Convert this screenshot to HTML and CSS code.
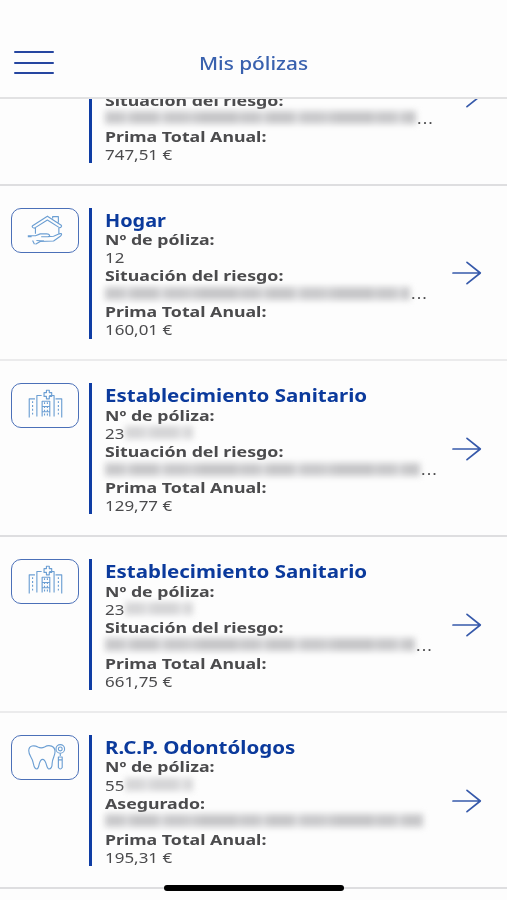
FILE: index.html
```html
<!DOCTYPE html>
<html lang="es">
<head>
<meta charset="utf-8">
<meta name="viewport" content="width=device-width, initial-scale=1">
<title>Mis pólizas</title>
<link rel="stylesheet" href="styles.css">
</head>
<body>
<svg class="defs" aria-hidden="true">
  <symbol id="arrow" viewBox="0 0 30 24"><path d="M1 12h27M15 1.3 28.3 12 15 22.7"/></symbol>
  <symbol id="home" viewBox="0 0 68 45"><path d="M21 17.500 36.500 7.500 51 17c1 1-.5 3-2 2.500L36.500 11.500 23 20c-2 0-3-1.500-2-2.500ZM42 10V8h6V14M24 20v6M48.500 20v6M16 28h8l5-2h7c3 0 4 3 1 3h-7M37 29l6-.5 6-2.500c3-1 3 1 1 2.500l-7 5-14 .5-5 3M16 29h4M21 33l2 4M25 33l8 .5"/></symbol>
  <symbol id="clinic" viewBox="0 0 68 45"><path d="M17.500 35V15.500h6M25.500 34V12h5M38.500 12h5v22M45 15.500h6.500V35M31 34V18h8v16M31 23.500h8M31 29h8M33 9h2.500V6.500h3V9H41v4h-2.500v2.500h-3V13H33Z"/><path class="dots" d="M21 18v16M48 18v16M33.500 19v14M36.500 19v14"/></symbol>
  <symbol id="tooth" viewBox="0 0 68 45"><path d="M17 15.500c0-6 6-6 9.500-4 2 1 5 1 7 0 5-3 11-1 11 5 0 5-3 7-3 12 0 3-1 6-3.500 6-3 0-2-10-6.500-10s-3 10-6 10-3-3-4-7c-1-5-4.500-7-4.500-12Z"/><circle cx="50" cy="13.500" r="4.500"/><circle cx="50" cy="13.500" r="2"/><path d="M50 18v3M48 22h4v11q-2 3-4 0ZM48 25h4"/></symbol>
</svg>
<header class="topbar">
  <button class="menu" aria-label="Menú"><span></span><span></span><span></span></button>
  <h1>Mis pólizas</h1>
</header>
<main>
  <article class="card card-clipped">
    <div class="row">
      <div class="side"></div>
      <div class="info info-end">
        <p><b>Situación del riesgo:</b></p>
        <p class="masked"><i class="blur w311"></i><span class="more">...</span></p>
        <p><b>Prima Total Anual:</b></p>
        <p><span>747,51 €</span></p>
      </div>
      <svg class="arrow"><use href="#arrow"/></svg>
    </div>
  </article>
  <article class="card">
    <div class="row">
      <div class="side"><svg class="badge"><use href="#home"/></svg></div>
      <div class="info">
        <h2 class="short">Hogar</h2>
        <p><b>Nº de póliza:</b></p>
        <p><span>12</span></p>
        <p><b>Situación del riesgo:</b></p>
        <p class="masked"><i class="blur w305"></i><span class="more">...</span></p>
        <p><b>Prima Total Anual:</b></p>
        <p><span>160,01 €</span></p>
      </div>
      <svg class="arrow"><use href="#arrow"/></svg>
    </div>
  </article>
  <article class="card">
    <div class="row">
      <div class="side"><svg class="badge"><use href="#clinic"/></svg></div>
      <div class="info">
        <h2>Establecimiento Sanitario</h2>
        <p><b>Nº de póliza:</b></p>
        <p class="masked"><span class="prefix">23</span><i class="blur blur-number"></i></p>
        <p><b>Situación del riesgo:</b></p>
        <p class="masked"><i class="blur w315"></i><span class="more">...</span></p>
        <p><b>Prima Total Anual:</b></p>
        <p><span>129,77 €</span></p>
      </div>
      <svg class="arrow"><use href="#arrow"/></svg>
    </div>
  </article>
  <article class="card">
    <div class="row">
      <div class="side"><svg class="badge"><use href="#clinic"/></svg></div>
      <div class="info">
        <h2>Establecimiento Sanitario</h2>
        <p><b>Nº de póliza:</b></p>
        <p class="masked"><span class="prefix">23</span><i class="blur blur-number"></i></p>
        <p><b>Situación del riesgo:</b></p>
        <p class="masked"><i class="blur w310"></i><span class="more">...</span></p>
        <p><b>Prima Total Anual:</b></p>
        <p><span>661,75 €</span></p>
      </div>
      <svg class="arrow"><use href="#arrow"/></svg>
    </div>
  </article>
  <article class="card">
    <div class="row">
      <div class="side"><svg class="badge"><use href="#tooth"/></svg></div>
      <div class="info">
        <h2>R.C.P. Odontólogos</h2>
        <p><b>Nº de póliza:</b></p>
        <p class="masked"><span class="prefix">55</span><i class="blur blur-number"></i></p>
        <p><b>Asegurado:</b></p>
        <p class="masked"><i class="blur w318"></i></p>
        <p><b>Prima Total Anual:</b></p>
        <p><span>195,31 €</span></p>
      </div>
      <svg class="arrow"><use href="#arrow"/></svg>
    </div>
  </article>
</main>
<div class="home-indicator"></div>
</body>
</html>
```
FILE: styles.css
```css
* { box-sizing: border-box; margin: 0; padding: 0; }
body {
  height: 900px;
  overflow: hidden;
  background: #fdfdfd;
  color: #4b4b4d;
  font: 15px/18.1px "Noto Sans", "Open Sans", sans-serif;
}
.defs { position: absolute; width: 0; height: 0; }
.topbar {
  display: grid;
  grid-template-columns: 54px 1fr 54px;
  align-items: end;
  height: 99px;
  padding-bottom: 21px;
  border-bottom: 2px solid #e2e2e3;
}
.menu {
  display: flex;
  flex-direction: column;
  justify-content: space-between;
  width: 40px;
  height: 23px;
  margin: 0 0 2px 14px;
  border: 0;
  background: none;
}
.menu span { height: 2px; border-radius: 1px; background: #2646a0; }
h1 {
  color: #3961ae;
  font-size: 17.5px;
  font-weight: 500;
  line-height: 26px;
  text-align: center;
  transform: scaleX(1.19);
}
.card { height: 175.9px; padding-top: 22px; border-bottom: 2px solid #dedee0; }
.card:nth-child(2), .card:nth-child(4) { border-bottom-color: #ebebec; }
.card-clipped {
  display: flex;
  align-items: flex-end;
  height: 86.500px;
  padding: 0 0 22px;
  overflow: hidden;
}
.row {
  display: grid;
  grid-template-columns: 89px 349px 30px;
  column-gap: 7px;
  flex: none;
  height: 131px;
}
.side { padding-left: 11px; }
.badge {
  display: block;
  width: 68px;
  height: 45px;
  border: 1.5px solid #4b70b8;
  border-radius: 10px;
  fill: none;
  stroke: #6c9fd3;
  stroke-width: 1.2;
  stroke-linejoin: round;
}
.dots { stroke-dasharray: 2 2; }
.info {
  margin-left: -7px;
  padding-left: 13px;
  border-left: 3px solid #0f3da4;
}
.info-end { padding-top: 60.200px; }
.info p { height: 18.1px; white-space: nowrap; }
.info p b, .info p span, .info h2 {
  display: inline-block;
  transform: scaleX(1.13);
  transform-origin: 0 50%;
}
.info p b { transform: scaleX(1.183); }
.info h2 {
  display: block;
  width: max-content;
  height: 22.300px;
  color: #0b3a9c;
  font-size: 17.5px;
  font-weight: 700;
  line-height: 24px;
  transform: scaleX(1.172);
}
.info h2.short { transform: scaleX(1.135); }
.masked { display: flex; align-items: center; }
.info .more { letter-spacing: 1px; }
.prefix { width: 20px; }
.blur {
  height: 13px;
  margin-right: 1px;
  background: repeating-linear-gradient(90deg, #c9c9cb 0 17px, #dadadc 21px 23px, #c7c7c9 28px 51px, #dddddf 55px 57px, #cacacc 62px 79px, #d3d3d5 86px, #c6c6c8 97px 131px, #dcdcde 136px);
  filter: blur(3px);
}
.blur-number { width: 68px; opacity: .75; }
.w305 { width: 305px; }
.w310 { width: 310px; }
.w311 { width: 311px; }
.w315 { width: 315px; }
.w318 { width: 318px; }
.arrow {
  width: 30px;
  height: 24px;
  margin-top: 53.500px;
  fill: none;
  stroke: #3659aa;
  stroke-width: 1.7;
  stroke-linecap: round;
  stroke-linejoin: round;
}
.home-indicator {
  position: absolute;
  top: 885px;
  left: 164px;
  width: 180px;
  height: 6px;
  border-radius: 3px;
  background: #000;
}
```
